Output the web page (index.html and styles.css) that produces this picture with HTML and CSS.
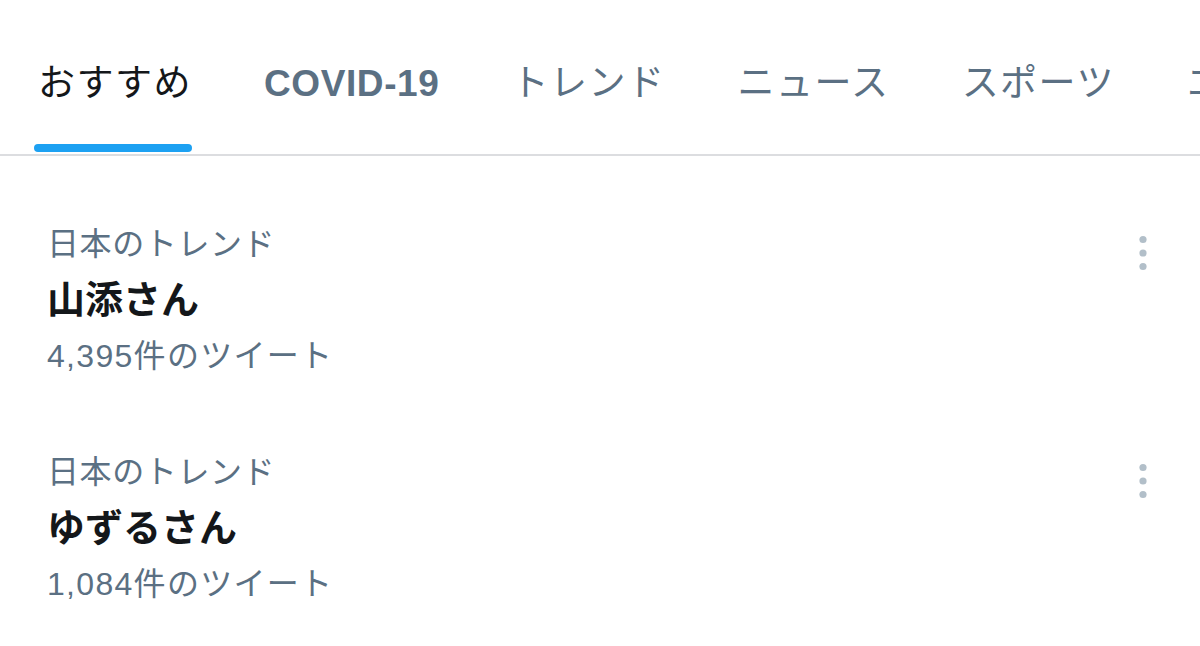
FILE: index.html
```html
<!DOCTYPE html>
<html lang="ja">
<head>
    <meta charset="UTF-8">
    <meta name="viewport" content="width=device-width, initial-scale=1.0">
    <title>話題を検索</title>
    <link rel="stylesheet" href="styles.css">
</head>
<body>
    <nav class="tabs">
        <div class="tab active">
            <span class="tab-label">おすすめ</span>
            <span class="tab-bar"></span>
        </div>
        <div class="tab latin">
            <span class="tab-label">COVID-19</span>
        </div>
        <div class="tab">
            <span class="tab-label">トレンド</span>
        </div>
        <div class="tab">
            <span class="tab-label">ニュース</span>
        </div>
        <div class="tab">
            <span class="tab-label">スポーツ</span>
        </div>
        <div class="tab">
            <span class="tab-label">エンタメ</span>
        </div>
    </nav>

    <div class="trends">
        <div class="trend">
            <div class="trend-body">
                <div class="trend-meta">日本のトレンド</div>
                <div class="trend-title">山添さん</div>
                <div class="trend-count">4,395件のツイート</div>
            </div>
            <svg class="more" width="40" height="40" viewBox="0 0 40 40">
                <circle cx="20" cy="7.5" r="3.6"/>
                <circle cx="20" cy="21" r="3.6"/>
                <circle cx="20" cy="34.5" r="3.6"/>
            </svg>
        </div>
        <div class="trend">
            <div class="trend-body">
                <div class="trend-meta">日本のトレンド</div>
                <div class="trend-title">ゆずるさん</div>
                <div class="trend-count">1,084件のツイート</div>
            </div>
            <svg class="more" width="40" height="40" viewBox="0 0 40 40">
                <circle cx="20" cy="7.5" r="3.6"/>
                <circle cx="20" cy="21" r="3.6"/>
                <circle cx="20" cy="34.5" r="3.6"/>
            </svg>
        </div>
    </div>
</body>
</html>
```

FILE: styles.css
```css
body {
    margin: 0;
    background-color: #ffffff;
    font-family: "Liberation Sans", "Noto Sans CJK JP", sans-serif;
    color: #14171a;
    overflow: hidden;
}

.tabs {
    display: flex;
    white-space: nowrap;
    overflow: hidden;
    padding-left: 2px;
    border-bottom: 2px solid #dcdde0;
}
.tab {
    display: flex;
    flex-direction: column;
    align-items: center;
    flex-shrink: 0;
    padding: 62px 36px 0;
    color: #5b7083;
}
.tab-label {
    font-size: 37px;
    line-height: 44px;
    letter-spacing: 1.5px;
}
.tab.latin .tab-label {
    font-weight: bold;
    letter-spacing: 0.6px;
}
.tab.active {
    color: #14171a;
}
.tab-bar {
    align-self: stretch;
    height: 8px;
    margin: 38px 0 2px -4px;
    border-radius: 4px;
    background-color: #1da1f2;
}

.trends {
    padding-top: 30px;
}
.trend {
    display: flex;
    align-items: flex-start;
    padding: 30px 37px 30px 47px;
}
.trend-body {
    flex: 1;
}
.trend-meta,
.trend-count {
    font-size: 32px;
    line-height: 56px;
    color: #5b7083;
}
.trend-meta {
    letter-spacing: 0.6px;
}
.trend-count {
    letter-spacing: 1.3px;
}
.trend-title {
    font-size: 38px;
    line-height: 56px;
    font-weight: bold;
}
.more {
    margin-top: 16px;
    fill: #b2bfc9;
}
```
